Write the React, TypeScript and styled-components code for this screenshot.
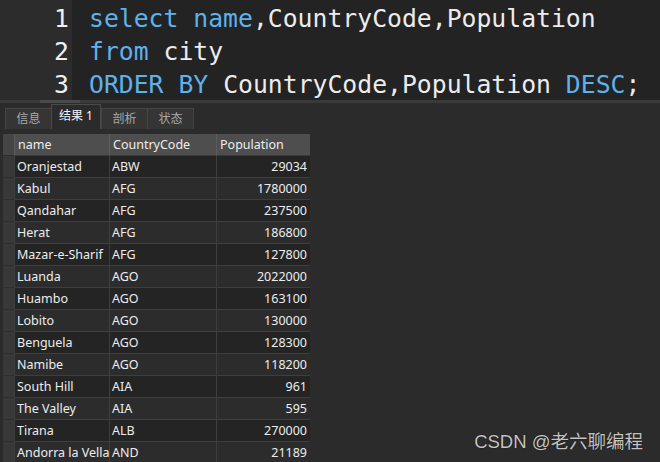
import React from "react";
import styled, { createGlobalStyle } from "styled-components";

const Global = createGlobalStyle`
  html, body { margin: 0; padding: 0; background: #2b2b2b; }
  * { box-sizing: border-box; }
`;

const Page = styled.div`
  position: relative;
  width: 660px;
  height: 462px;
  overflow: hidden;
  background: #2b2b2b;
  font-family: "Noto Sans", "Noto Sans CJK SC", sans-serif;
`;

const Editor = styled.div`
  display: flex;
  height: 100px;
`;

const Gutter = styled.div`
  width: 72px;
  background: #2c2c2c;
  padding: 2px 3px 0 0;
  text-align: right;
  color: #f0f0f0;
  font-family: "DejaVu Sans Mono", "Liberation Mono", monospace;
  font-size: 24.75px;
  line-height: 33px;
`;

const Code = styled.div`
  flex: 1;
  background: #232323;
  padding: 2px 0 0 17px;
  color: #ececec;
  font-family: "DejaVu Sans Mono", "Liberation Mono", monospace;
  font-size: 24.75px;
  line-height: 33px;
  white-space: pre;
`;

const Kw = styled.span`
  color: #5eb2ec;
`;

const HScroll = styled.div`
  height: 3px;
  background: #3a3a3a;
  display: flex;
  padding-left: 40px;
`;

const Thumb = styled.div`
  width: 40px;
  background: #4a4a4a;
`;

const TabBar = styled.div`
  display: flex;
  align-items: flex-end;
  height: 26px;
  padding-left: 5px;
  background: #2b2b2b;
`;

const Tab = styled.div<{ $active?: boolean }>`
  height: ${(p) => (p.$active ? 25 : 21)}px;
  width: ${(p) => (p.$active ? 50 : 47)}px;
  margin-right: ${(p) => (p.$active ? 0 : -1)}px;
  border: 1px solid ${(p) => (p.$active ? "#4a4a4a" : "#454545")};
  border-bottom: none;
  background: ${(p) => (p.$active ? "#2b2b2b" : "#353535")};
  color: ${(p) => (p.$active ? "#f4f4f4" : "#a8a8a8")};
  font-size: 12px;
  display: flex;
  align-items: center;
  justify-content: center;
  padding-bottom: ${(p) => (p.$active ? 5 : 2)}px;
  position: relative;
  z-index: ${(p) => (p.$active ? 1 : 0)};
`;

const GridWrap = styled.div`
  padding: 5px 0 0 3px;
`;

const Grid = styled.div`
  display: grid;
  grid-template-columns: 11px 95px 107px 94px;
  grid-auto-rows: 22px;
  width: 307px;
`;

const RowHead = styled.div<{ $header?: boolean }>`
  background: ${(p) => (p.$header ? "#454545" : "#383838")};
  border-bottom: 1px solid #2e2e2e;
`;

const HeadCell = styled.div`
  background: #4e4e4e;
  color: #ededed;
  font-size: 12.5px;
  display: flex;
  align-items: center;
  padding-left: 3px;
  border-left: 1px solid #5c5c5c;
  border-bottom: 1px solid #3a3a3a;
`;

const Cell = styled.div<{ $alt?: boolean; $num?: boolean }>`
  background: ${(p) => (p.$alt ? "#2c2c2c" : "#242424")};
  color: #ececec;
  font-size: 12.5px;
  display: flex;
  align-items: center;
  justify-content: ${(p) => (p.$num ? "flex-end" : "flex-start")};
  padding: ${(p) => (p.$num ? "0 3px 0 0" : "0 0 0 2px")};
  border-left: 1px solid #3e3e3e;
  border-bottom: 1px solid #3e3e3e;
  white-space: nowrap;
  overflow: hidden;
`;

const Watermark = styled.div`
  position: absolute;
  right: 17px;
  bottom: 9px;
  color: #c4c4c4;
  font-family: "Liberation Sans", "Noto Sans CJK SC", sans-serif;
  font-size: 18.5px;
  text-shadow: 0 0 1px #000;
`;

const rows: [string, string, number][] = [
  ["Oranjestad", "ABW", 29034],
  ["Kabul", "AFG", 1780000],
  ["Qandahar", "AFG", 237500],
  ["Herat", "AFG", 186800],
  ["Mazar-e-Sharif", "AFG", 127800],
  ["Luanda", "AGO", 2022000],
  ["Huambo", "AGO", 163100],
  ["Lobito", "AGO", 130000],
  ["Benguela", "AGO", 128300],
  ["Namibe", "AGO", 118200],
  ["South Hill", "AIA", 961],
  ["The Valley", "AIA", 595],
  ["Tirana", "ALB", 270000],
  ["Andorra la Vella", "AND", 21189],
];

export default function App() {
  return (
    <Page>
      <Global />
      <Editor>
        <Gutter>
          <div>1</div>
          <div>2</div>
          <div>3</div>
        </Gutter>
        <Code>
          <div>
            <Kw>select</Kw> <Kw>name</Kw>,CountryCode,Population
          </div>
          <div>
            <Kw>from</Kw> city
          </div>
          <div>
            <Kw>ORDER</Kw> <Kw>BY</Kw> CountryCode,Population <Kw>DESC</Kw>;
          </div>
        </Code>
      </Editor>
      <HScroll>
        <Thumb />
      </HScroll>
      <TabBar>
        <Tab>信息</Tab>
        <Tab $active>结果 1</Tab>
        <Tab>剖析</Tab>
        <Tab>状态</Tab>
      </TabBar>
      <GridWrap>
        <Grid>
          <RowHead $header />
          <HeadCell>name</HeadCell>
          <HeadCell>CountryCode</HeadCell>
          <HeadCell>Population</HeadCell>
          {rows.map(([n, c, p], i) => (
            <React.Fragment key={n}>
              <RowHead />
              <Cell $alt={i % 2 === 1}>{n}</Cell>
              <Cell $alt={i % 2 === 1}>{c}</Cell>
              <Cell $alt={i % 2 === 1} $num>
                {p}
              </Cell>
            </React.Fragment>
          ))}
        </Grid>
      </GridWrap>
      <Watermark>CSDN @老六聊编程</Watermark>
    </Page>
  );
}
